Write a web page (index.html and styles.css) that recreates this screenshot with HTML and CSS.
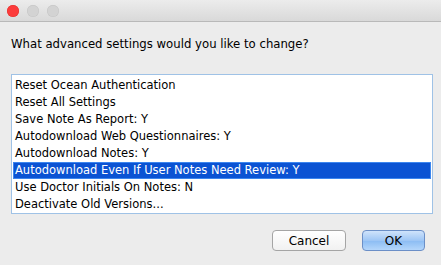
FILE: index.html
```html
<!DOCTYPE html>
<html>
<head>
<meta charset="utf-8">
<link rel="stylesheet" href="styles.css">
</head>
<body>
<div class="window">
  <div class="titlebar">
    <span class="light red"></span>
    <span class="light"></span>
    <span class="light"></span>
  </div>
  <div class="content">
    <div class="prompt">What advanced settings would you like to change?</div>
    <ul class="list">
      <li>Reset Ocean Authentication</li>
      <li>Reset All Settings</li>
      <li>Save Note As Report: Y</li>
      <li>Autodownload Web Questionnaires: Y</li>
      <li>Autodownload Notes: Y</li>
      <li class="selected">Autodownload Even If User Notes Need Review: Y</li>
      <li>Use Doctor Initials On Notes: N</li>
      <li>Deactivate Old Versions...</li>
    </ul>
    <div class="buttons">
      <button class="btn">Cancel</button>
      <button class="btn primary">OK</button>
    </div>
  </div>
</div>
</body>
</html>
```
FILE: styles.css
```css
html, body {
  margin: 0;
  padding: 0;
  background: #ececec;
}
body {
  font-family: "DejaVu Sans", "Liberation Sans", sans-serif;
  font-size: 12px;
  color: #000;
  width: 441px;
  height: 265px;
  overflow: hidden;
}
.titlebar {
  height: 21px;
  border-bottom: 1px solid #b9b9b9;
  background: linear-gradient(#ececec, #d9d9d9);
  display: flex;
  align-items: center;
  padding-left: 7px;
  gap: 8px;
}
.light {
  width: 12px;
  height: 12px;
  border-radius: 50%;
  background: #d3d3d3;
  box-shadow: inset 0 0 0 0.5px #c4c4c4;
}
.light.red {
  background: #fc3b3b;
  box-shadow: inset 0 0 0 0.5px #e0302b;
}
.content {
  padding: 0 10px 0 11px;
}
.prompt {
  margin-top: 14px;
  height: 16px;
  line-height: 16px;
  font-size: 11.7px;
}
.list {
  list-style: none;
  margin: 22px 0 0 0;
  padding: 2px 1px;
  width: 418px;
  height: 134px;
  background: #fff;
  border: 1px solid #9fc2e6;
  font-size: 11.5px;
}
.list li {
  height: 17px;
  line-height: 17px;
  padding-left: 2px;
  white-space: nowrap;
}
.list li.selected {
  background: #0b53d3;
  color: #fff;
  box-shadow: inset 0 0 0 1px #3c86ef;
}
.buttons {
  display: flex;
  justify-content: flex-end;
  gap: 16px;
  margin-top: 16px;
  padding-right: 6px;
}
.btn {
  font-family: "DejaVu Sans", "Liberation Sans", sans-serif;
  font-size: 12px;
  height: 21px;
  width: 74px;
  border: 1px solid #a5a5a5;
  border-radius: 4px;
  background: linear-gradient(#ffffff, #f1f1f1);
  color: #000;
  padding: 0;
}
.btn.primary {
  width: 63px;
  border-color: #6b8fc7;
  background: linear-gradient(#cfe3fb, #9ec6f5 50%, #8bbcf3 51%, #b4d6fb);
}
```
